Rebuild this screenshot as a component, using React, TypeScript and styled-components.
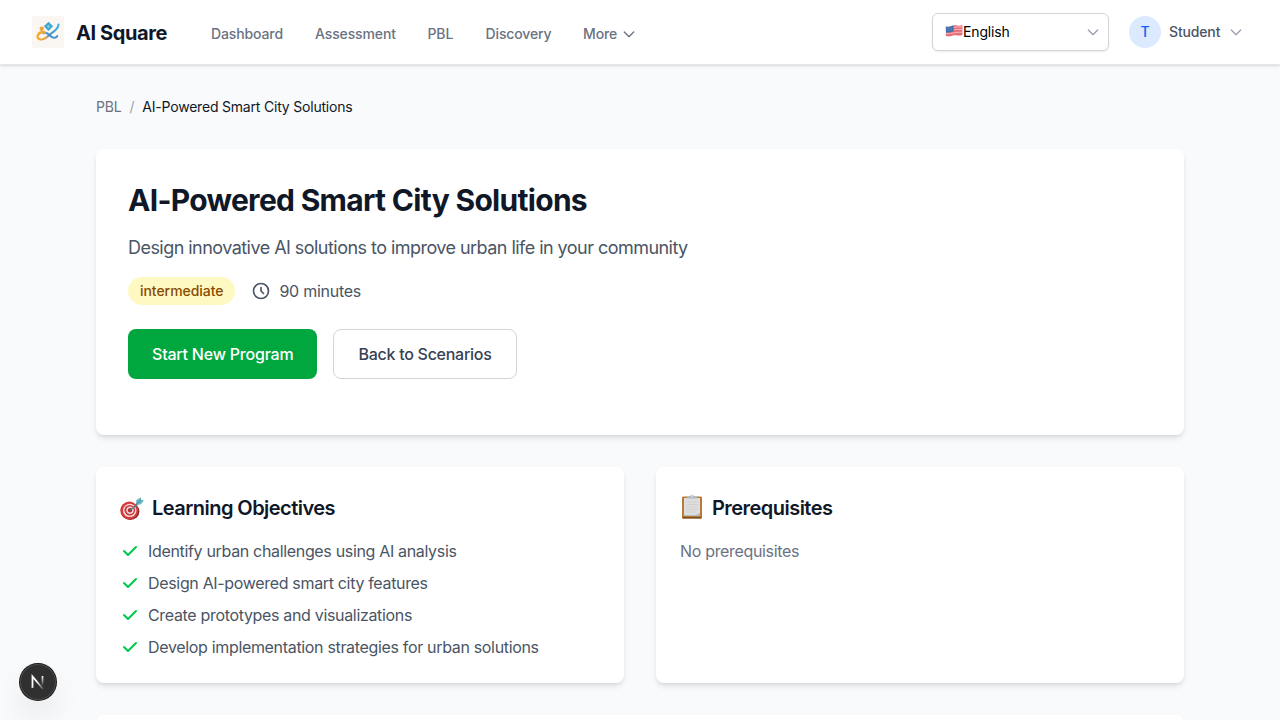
import React from 'react';
import styled, { createGlobalStyle } from 'styled-components';

const GlobalStyle = createGlobalStyle`
  *, *::before, *::after { box-sizing: border-box; }
  body {
    margin: 0;
    background: #f9fafb;
    color: #101828;
    font-family: Inter, "Liberation Sans", sans-serif;
    font-size: 16px;
    line-height: 24px;
    letter-spacing: -0.33px;
  }
  h1, h2, p, ul { margin: 0; padding: 0; }
  button { font: inherit; letter-spacing: inherit; cursor: pointer; }
  svg { display: block; flex: none; }
`;

const Page = styled.div`
  height: 100vh;
  overflow: hidden;
`;

const Header = styled.header`
  position: relative;
  display: flex;
  align-items: center;
  height: 65px;
  padding: 0 32px 1px;
  background: #fff;
  border-bottom: 1px solid #e5e7eb;
  box-shadow: 0 1px 3px rgba(0, 0, 0, 0.1), 0 1px 2px -1px rgba(0, 0, 0, 0.1);
`;

const Brand = styled.a`
  display: flex;
  align-items: center;
  gap: 12px;
  width: 163px;
  font-size: 20px;
  line-height: 28px;
  font-weight: 700;
  letter-spacing: -0.4px;
  white-space: nowrap;
`;

const BrandName = styled.span`
  padding-top: 2px;
`;

const Nav = styled.nav`
  display: flex;
  gap: 32px;
  padding: 4px 0 0 16px;
`;

const NavLink = styled.a<{ $width: number }>`
  display: flex;
  align-items: center;
  gap: 4px;
  width: ${(p) => p.$width}px;
  color: #6a7282;
  font-size: 14px;
  line-height: 20px;
  font-weight: 500;
  letter-spacing: -0.12px;
  white-space: nowrap;
`;

const HeaderTools = styled.div`
  display: flex;
  align-items: center;
  gap: 20px;
  margin-left: auto;
`;

const LanguageSelect = styled.button`
  display: flex;
  align-items: center;
  width: 177px;
  height: 38px;
  padding: 0 7px 0 12px;
  background: #fff;
  border: 1px solid #d1d5dc;
  border-radius: 6px;
  box-shadow: 0 1px 2px rgba(0, 0, 0, 0.08);
  color: #000;
  font-size: 14px;
  line-height: 20px;
  letter-spacing: -0.15px;
`;

const LanguageName = styled.span`
  flex: 1;
  text-align: left;
`;

const Account = styled.button`
  display: flex;
  align-items: center;
  gap: 8px;
  width: 119px;
  padding: 0;
  border: 0;
  background: none;
  color: #4a5565;
  font-size: 14px;
  line-height: 20px;
  font-weight: 450;
  letter-spacing: -0.15px;
`;

const Avatar = styled.span`
  display: grid;
  place-items: center;
  width: 32px;
  height: 32px;
  border-radius: 50%;
  background: #dbeafe;
  color: #155dfc;
  font-weight: 500;
`;

const Main = styled.main`
  display: flex;
  flex-direction: column;
  gap: 32px;
  width: 1088px;
  margin: 0 auto;
  padding: 32px 0;
`;

const Breadcrumb = styled.nav`
  display: flex;
  gap: 8px;
  color: #6a7282;
  font-size: 14px;
  line-height: 20px;
  letter-spacing: -0.2px;
`;

const Slash = styled.span`
  color: #99a1af;
`;

const Current = styled.span`
  color: #101828;
`;

const Card = styled.section<{ $pad: number }>`
  padding: ${(p) => p.$pad}px;
  background: #fff;
  border-radius: 8px;
  box-shadow: 0 4px 6px -1px rgba(0, 0, 0, 0.1), 0 2px 4px -2px rgba(0, 0, 0, 0.1);
`;

const Title = styled.h1`
  padding-top: 1px;
  margin-bottom: 16px;
  font-size: 30px;
  line-height: 36px;
  font-weight: 700;
  letter-spacing: -0.7px;
`;

const Lead = styled.p`
  margin-bottom: 15px;
  color: #4a5565;
  font-size: 18px;
  line-height: 28px;
  letter-spacing: -0.54px;
`;

const MetaRow = styled.div`
  display: flex;
  align-items: center;
  gap: 16px;
  margin-bottom: 24px;
`;

const Level = styled.span`
  padding: 4px 12px;
  border-radius: 14px;
  background: #fef9c2;
  color: #894b00;
  font-size: 14px;
  line-height: 20px;
  font-weight: 500;
  letter-spacing: -0.05px;
`;

const Duration = styled.span`
  display: flex;
  align-items: center;
  gap: 8px;
  color: #4a5565;
  letter-spacing: -0.26px;
`;

const Actions = styled.div`
  display: flex;
  gap: 16px;
  margin-bottom: 24px;
`;

const ActionButton = styled.button<{ $primary?: boolean }>`
  height: 50px;
  padding: 0 24px;
  border: ${(p) => (p.$primary ? '0' : '1px solid #d1d5dc')};
  border-radius: 8px;
  background: ${(p) => (p.$primary ? '#00a63e' : '#fff')};
  color: ${(p) => (p.$primary ? '#fff' : '#364153')};
  font-weight: 500;
  letter-spacing: ${(p) => (p.$primary ? '-0.21px' : '-0.27px')};
`;

const Columns = styled.div`
  display: grid;
  grid-template-columns: 1fr 1fr;
  gap: 32px;
`;

const CardTitle = styled.h2`
  display: flex;
  align-items: center;
  gap: 8px;
  height: 32px;
  margin-bottom: 16px;
  font-size: 20px;
  line-height: 28px;
  font-weight: 600;
  letter-spacing: -0.54px;
`;

const CardTitleText = styled.span`
  padding-top: 2px;
`;

const List = styled.ul`
  display: flex;
  flex-direction: column;
  gap: 8px;
  list-style: none;
`;

const Item = styled.li`
  display: flex;
  align-items: center;
  gap: 8px;
  color: #4a5565;
`;

const Empty = styled.p`
  color: #6a7282;
`;

const DevBadge = styled.div`
  position: fixed;
  left: 20px;
  bottom: 20px;
  display: grid;
  place-items: center;
  width: 36px;
  height: 36px;
  border-radius: 50%;
  background: #303030;
  box-shadow: 0 0 0 1px #171717, inset 0 0 0 1px #4a4a4a, 0 16px 32px -8px rgba(0, 0, 0, 0.24);
`;

const Logo = () => (
  <svg width="32" height="32" viewBox="0 0 32 32" fill="none">
    <defs>
      <linearGradient id="ribbon" x1="5" y1="0" x2="28" y2="0" gradientUnits="userSpaceOnUse">
        <stop stopColor="#f7a823" />
        <stop offset=".36" stopColor="#eda444" />
        <stop offset=".55" stopColor="#4a91cf" />
        <stop offset="1" stopColor="#43b4e0" />
      </linearGradient>
    </defs>
    <rect width="32" height="32" fill="#faf6f1" />
    <path d="M12.500 16.300C9 15.500 4.500 19 5.700 21.800c1.600 3.400 7.500 1.500 12-3 3.800-3.800 8.500-5 8.800-10.300" stroke="url(#ribbon)" strokeWidth="2.100" strokeLinecap="round" />
    <path d="M11.500 17.300c3-1.800 5 .7 7.300 3 2 2 5 2 6.500-.2" stroke="#438fd0" strokeWidth="2" strokeLinecap="round" />
    <path d="M6.500 17.500c2-2 5-2 6.500-.5" stroke="#f4a833" strokeWidth="2" strokeLinecap="round" />
    <circle cx="9.700" cy="12.800" r="2.200" fill="#f1a33b" />
    <path d="m16.500 5.800 4.600 4.500-4.600 4.700-4.600-4.700Z" fill="#40a5cb" />
    <path d="m16.500 8.600 1.800 1.800-1.800 1.800-1.800-1.800Z" fill="#7acbdf" />
  </svg>
);

const ChevronIcon = ({ color = '#6a7282' }: { color?: string }) => (
  <svg width="16" height="16" viewBox="0 0 24 24" fill="none" stroke={color} strokeWidth="2" strokeLinecap="round" strokeLinejoin="round">
    <path d="M19 9l-7 7-7-7" />
  </svg>
);

const FlagIcon = () => (
  <svg width="18" height="16" viewBox="-.9 0 18 16">
    <path d="M0 2.500C4 4 6 .8 10 1.300c3 .5 4 .5 6.500-.3v10c-3 1-5 .4-7.500.2C5.500 11 4 13.500 0 12Z" fill="#e76d78" />
    <path d="M7 3.500q4-1 9.500-.5M7 6q4-1 9.500-.5M.3 9.500C5 10 7 8 16.500 8.300" stroke="#f4bfc4" strokeWidth=".9" fill="none" />
    <path d="M0 2.500C3 3.500 5 2 7.700 1.500v6C5 8 3 9 0 8.400Z" fill="#3f70ad" />
    <path d="M1 4.500q3 .2 6-1M1 6.500q3 .2 6-1" stroke="#8aa9ce" strokeWidth=".6" strokeDasharray=".7 .8" fill="none" />
  </svg>
);

const ClockIcon = () => (
  <svg width="20" height="20" viewBox="0 0 24 24" fill="none" stroke="#4a5565" strokeWidth="2" strokeLinecap="round" strokeLinejoin="round">
    <path d="M12 8v4l3 3m6-3a9 9 0 11-18 0 9 9 0 0118 0z" />
  </svg>
);

const CheckIcon = () => (
  <svg width="20" height="20" viewBox="0 0 20 20" fill="#00c950">
    <path fillRule="evenodd" clipRule="evenodd" d="M16.707 5.293a1 1 0 010 1.414l-8 8a1 1 0 01-1.414 0l-4-4a1 1 0 011.414-1.414L8 12.586l7.293-7.293a1 1 0 011.414 0z" />
  </svg>
);

const TargetIcon = () => (
  <svg width="24" height="28" viewBox="0 -2.500 24 28">
    <ellipse cx="10.200" cy="16" rx="9.200" ry="8.500" fill="#8f252b" />
    <circle cx="9.300" cy="15" r="9" fill="#d63b3b" />
    <circle cx="9.700" cy="14.900" r="6.700" fill="#f1dcda" />
    <circle cx="9.800" cy="14.800" r="5.300" fill="#cf3439" />
    <circle cx="10" cy="14.700" r="3.700" fill="#f1dcda" />
    <circle cx="10" cy="14.700" r="2.200" fill="#bf2930" />
    <path d="m10 14.700 8-6.200" stroke="#407e8e" strokeWidth="1.300" />
    <path d="m15.800 9 .6-4.500 4.400-2.800.4 2.600 2.800.6-3.300 4.100Z" fill="#69b6c4" />
    <path d="m16 9.200 5-4.700" stroke="#347f94" strokeWidth=".8" />
  </svg>
);

const ClipboardIcon = () => (
  <svg width="24" height="28" viewBox="0 0 24 28">
    <rect x="2" y="3.500" width="20" height="22" rx="1.200" fill="#b77c38" />
    <path d="M2.500 24h19v1.500h-19Z" fill="#7f4c20" />
    <path d="M4 5h16v18H4Z" fill="#dededf" />
    <path d="M4 22h12l4-2v3H4Z" fill="#b9babb" />
    <path d="M6.500 9h11M6.500 11.500h11M6.500 14h11M6.500 16.500h11M6.500 19h8" stroke="#cfcfcf" />
    <path d="M7 5.500V4l3-1q2-3 4 0l3 1v1.500Z" fill="#b1bac3" />
    <circle cx="12" cy="3" r=".8" fill="#fff" />
  </svg>
);

const DevMark = () => (
  <svg width="16" height="16" viewBox="0 0 16 16" fill="none">
    <defs>
      <linearGradient id="stem" x1="0" y1="2" x2="0" y2="12" gradientUnits="userSpaceOnUse">
        <stop stopColor="#fff" />
        <stop offset="1" stopColor="#fff" stopOpacity="0" />
      </linearGradient>
      <linearGradient id="diagonal" x1="7" y1="7" x2="14" y2="15" gradientUnits="userSpaceOnUse">
        <stop stopColor="#fff" />
        <stop offset="1" stopColor="#fff" stopOpacity=".1" />
      </linearGradient>
    </defs>
    <path d="M2.500 14V2.500L13 15" stroke="url(#diagonal)" strokeWidth="1.800" />
    <path d="M12.500 2v10" stroke="url(#stem)" strokeWidth="1.700" />
  </svg>
);

const objectives = [
  'Identify urban challenges using AI analysis',
  'Design AI-powered smart city features',
  'Create prototypes and visualizations',
  'Develop implementation strategies for urban solutions',
];

export default function App() {
  return (
    <Page>
      <GlobalStyle />
      <Header>
        <Brand><Logo /><BrandName>AI Square</BrandName></Brand>
        <Nav>
          <NavLink $width={72}>Dashboard</NavLink>
          <NavLink $width={80.5}>Assessment</NavLink>
          <NavLink $width={26}>PBL</NavLink>
          <NavLink $width={65.5}>Discovery</NavLink>
          <NavLink $width={54}>More <ChevronIcon /></NavLink>
        </Nav>
        <HeaderTools>
          <LanguageSelect>
            <FlagIcon />
            <LanguageName>English</LanguageName>
            <ChevronIcon color="#99a1af" />
          </LanguageSelect>
          <Account>
            <Avatar>T</Avatar>
            Student
            <ChevronIcon color="#99a1af" />
          </Account>
        </HeaderTools>
      </Header>
      <Main>
        <Breadcrumb>
          <span>PBL</span>
          <Slash>/</Slash>
          <Current>AI-Powered Smart City Solutions</Current>
        </Breadcrumb>
        <Card $pad={32}>
          <Title>AI-Powered Smart City Solutions</Title>
          <Lead>Design innovative AI solutions to improve urban life in your community</Lead>
          <MetaRow>
            <Level>intermediate</Level>
            <Duration><ClockIcon />90 minutes</Duration>
          </MetaRow>
          <Actions>
            <ActionButton $primary>Start New Program</ActionButton>
            <ActionButton>Back to Scenarios</ActionButton>
          </Actions>
        </Card>
        <Columns>
          <Card $pad={24}>
            <CardTitle><TargetIcon /><CardTitleText>Learning Objectives</CardTitleText></CardTitle>
            <List>
              {objectives.map((text) => (
                <Item key={text}><CheckIcon />{text}</Item>
              ))}
            </List>
          </Card>
          <Card $pad={24}>
            <CardTitle><ClipboardIcon /><CardTitleText>Prerequisites</CardTitleText></CardTitle>
            <Empty>No prerequisites</Empty>
          </Card>
        </Columns>
        <Card $pad={24} />
      </Main>
      <DevBadge><DevMark /></DevBadge>
    </Page>
  );
}
